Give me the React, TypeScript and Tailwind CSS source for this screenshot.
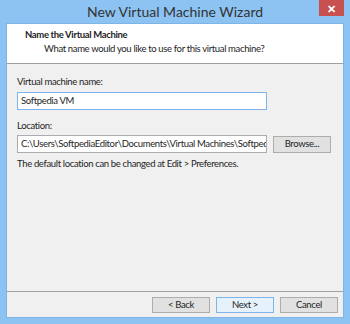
const font = { fontFamily: 'Lato, "Open Sans", sans-serif' };

const WizButton = ({ label, active }: { label: string; active?: boolean }) => (
    <button
        className={`flex h-[16px] w-[58px] items-center justify-center border text-[9.5px] leading-none tracking-[-0.35px] text-[#1e1e1e] ${active
            ? "border-[#7eb4ea] bg-[#e5f1fb]"
            : "border-[#adadad] bg-[#e1e1e1]"
            }`}
    >
        {label}
    </button>
);

export default function App() {
    return (
        <div
            className="flex h-[324px] w-[350px] flex-col bg-[#8cc3f2] text-[#1e1e1e]"
            style={font}
        >
            <div className="relative flex h-[23px] shrink-0 items-center justify-center">
                <span className="text-[14px] leading-none text-[#333]">New Virtual Machine Wizard</span>
                <div className="absolute right-[6px] top-0 flex h-[16px] w-[25px] items-center justify-center bg-[#c75050] text-[11px] font-bold leading-none text-white">
                    ✕
                </div>
            </div>
            <div className="mx-[6px] flex h-[295px] flex-col border border-[#7fb4e6] bg-[#f0f0f0] tracking-[-0.35px]">
                <div className="relative h-[40px] shrink-0 border-b border-[#a0a0a0] bg-white">
                    <p className="absolute left-[18px] top-[6px] text-[9.5px] font-bold leading-none">Name the Virtual Machine</p>
                    <p className="absolute left-[37px] top-[20px] text-[9.5px] leading-none">What name would you like to use for this virtual machine?</p>
                </div>
                <div className="flex flex-1 flex-col px-[10px] pt-[13px]">
                    <p className="text-[9.5px] leading-none">Virtual machine name:</p>
                    <div className="mt-[5px] flex h-[18px] w-[250px] items-center border border-[#7eb4ea] bg-white px-[3px] text-[9.5px] leading-none">
                        Softpedia VM
                    </div>
                    <p className="mt-[11px] text-[9.5px] leading-none">Location:</p>
                    <div className="mt-[5px] flex items-center gap-[6px]">
                        <div className="h-[18px] w-[250px] overflow-hidden whitespace-nowrap border border-[#abadb3] bg-white px-[3px] text-[9.5px] leading-[16px]">
                            C:\Users\SoftpediaEditor\Documents\Virtual Machines\Softpedia
                        </div>
                        <button className="flex h-[17px] w-[58px] items-center justify-center border border-[#adadad] bg-[#e1e1e1] text-[9.5px] leading-none">
                            Browse...
                        </button>
                    </div>
                    <p className="mt-[6px] text-[9.5px] leading-none">The default location can be changed at Edit &gt; Preferences.</p>
                </div>
                <div className="flex h-[26px] shrink-0 items-center justify-end gap-[6px] border-t border-[#a0a0a0] pr-[5px]">
                    <WizButton label="< Back" />
                    <WizButton label="Next >" active />
                    <WizButton label="Cancel" />
                </div>
            </div>
        </div>
    );
}
